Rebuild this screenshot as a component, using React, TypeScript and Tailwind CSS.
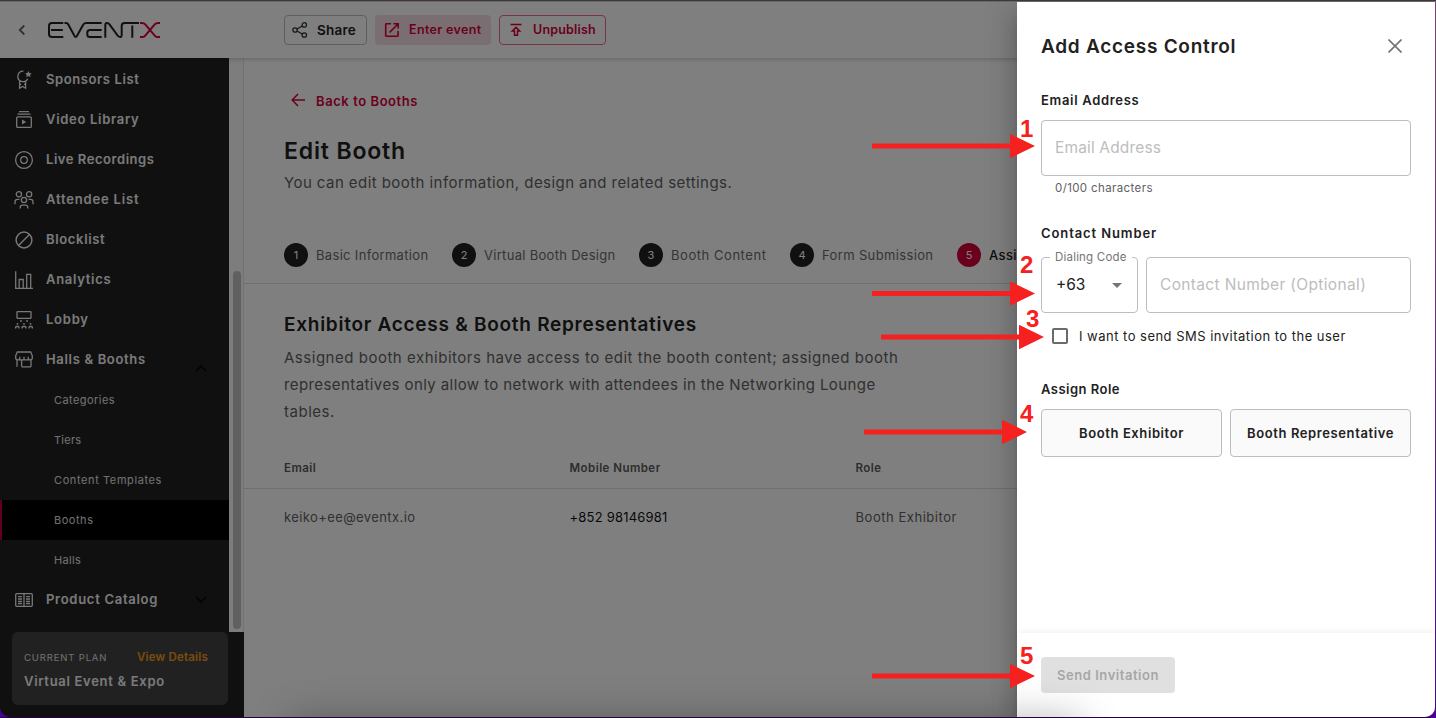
import React from "react";

const navIcon = "h-6 w-6 shrink-0 fill-none stroke-[#f0f0f0] stroke-[1.3]";

const SponsorIcon = () => (
  <svg viewBox="0 0 24 24" className={navIcon}>
    <path d="M11.5 3.2a5.2 5.2 0 1 0 4.2 7.6M7.6 13.2v7l3-1.8 3 1.8v-7M7.6 16.3h1.6M12 16.3h1.6" />
    <path d="M16.4 3l1 2.1 2.3.3-1.7 1.6.5 2.3-2.1-1.2-2.1 1.2.5-2.3-1.7-1.6 2.3-.3z" className="fill-[#f0f0f0] stroke-none" />
  </svg>
);
const VideoIcon = () => (
  <svg viewBox="0 0 24 24" className={navIcon}>
    <path d="M7 3.7h10M5.5 6.2h13" />
    <rect x="4.7" y="8.8" width="14.6" height="10.6" rx="1" />
    <path d="M10 11.6v5l4.2-2.5z" className="fill-[#f0f0f0] stroke-none" />
  </svg>
);
const LiveIcon = () => (
  <svg viewBox="0 0 24 24" className={navIcon}>
    <circle cx="12" cy="12" r="8.4" />
    <circle cx="12" cy="12" r="3.3" />
  </svg>
);
const AttendeeIcon = () => (
  <svg viewBox="0 0 24 24" className={navIcon}>
    <circle cx="6.9" cy="6.3" r="2.6" />
    <circle cx="17.1" cy="6.3" r="2.6" />
    <circle cx="12" cy="12" r="2.6" />
    <path d="M3 16.2v-2.4c0-1.5 1-2.5 2.5-2.5h2M21 16.2v-2.4c0-1.5-1-2.5-2.5-2.5h-2M8.3 20.6v-1.3c0-1.3.9-2.1 2.1-2.1h3.2c1.2 0 2.1.8 2.1 2.1v1.3" />
  </svg>
);
const BlockIcon = () => (
  <svg viewBox="0 0 24 24" className="h-6 w-6 shrink-0 fill-none stroke-[#f0f0f0] stroke-[1.5]">
    <circle cx="12" cy="12" r="7.9" />
    <path d="M17.5 6.5l-11 11" />
  </svg>
);
const AnalyticsIcon = () => (
  <svg viewBox="0 0 24 24" className={navIcon}>
    <path d="M3.7 3.2v17.1h17.2M7.2 20v-8.5h4V20M14.7 20V6.3h4V20" />
  </svg>
);
const LobbyIcon = () => (
  <svg viewBox="0 0 24 24" className={navIcon}>
    <rect x="5" y="3.7" width="14" height="6.6" rx="0.5" />
    <path d="M3.6 20.6v-1.1q0-1 1-1h1.4q1 0 1 1v1.1M10 20.6v-1.1q0-1 1-1h2q1 0 1 1v1.1M17 20.6v-1.1q0-1 1-1h1.4q1 0 1 1v1.1" />
    <g className="fill-[#f0f0f0] stroke-none">
      <circle cx="9" cy="13" r="0.9" />
      <circle cx="15" cy="13" r="0.9" />
      <circle cx="5.5" cy="15.9" r="0.9" />
      <circle cx="12" cy="15.9" r="0.9" />
      <circle cx="18.5" cy="15.9" r="0.9" />
    </g>
  </svg>
);
const BoothIcon = () => (
  <svg viewBox="0 0 24 24" className={navIcon}>
    <path d="M5.3 4h13.4l1.6 3.8v2.2q0 1.8-1.9 1.8H5.6q-1.9 0-1.9-1.8V7.8zM7.8 8.8v1.4q0 1-1 1.6M12 8.8v3M16.2 8.8v1.4q0 1 1 1.6M5 11.8v7M19 11.8v7M9.6 18.6v-6.3M9.6 18.8H19" />
  </svg>
);
const CatalogIcon = () => (
  <svg viewBox="0 0 24 24" className={navIcon}>
    <rect x="3.7" y="5.7" width="16.6" height="12.6" rx="1" />
    <path d="M12 5.7v12.6M6 8.7h4M6 11h4M6 13.3h4M6 15.5h4M14 8.7h4M14 11h4M14 13.3h4M14 15.5h4" />
  </svg>
);

const nav = [
  { label: "Sponsors List", icon: SponsorIcon, cls: "tracking-[0.6px]" },
  { label: "Video Library", icon: VideoIcon, cls: "tracking-[0.7px]" },
  { label: "Live Recordings", icon: LiveIcon, cls: "tracking-[0.55px]" },
  { label: "Attendee List", icon: AttendeeIcon, cls: "tracking-[0.82px]" },
  { label: "Blocklist", icon: BlockIcon, cls: "tracking-[0.66px]" },
  { label: "Analytics", icon: AnalyticsIcon, cls: "tracking-[0.7px]" },
  { label: "Lobby", icon: LobbyIcon, cls: "tracking-[0.75px]" },
  { label: "Halls & Booths", icon: BoothIcon, cls: "tracking-[0.67px]", arrow: "up" },
];
const subNav = [
  { label: "Categories", cls: "tracking-[0.43px]" },
  { label: "Tiers", cls: "tracking-[0.25px]" },
  { label: "Content Templates", cls: "tracking-[0.6px]" },
  { label: "Booths", cls: "tracking-[0.53px]", active: true },
  { label: "Halls", cls: "tracking-[0.3px]" },
];
const steps = [
  { label: "Basic Information", w: "w-[168px]", cls: "tracking-[0.32px]" },
  { label: "Virtual Booth Design", w: "w-[187px]", cls: "tracking-[0.3px]" },
  { label: "Booth Content", w: "w-[151px]", cls: "tracking-[0.55px]" },
  { label: "Form Submission", w: "w-[167px]", cls: "tracking-[0.36px]" },
  { label: "Assi", w: "w-[60px]", cls: "tracking-[0.4px]", active: true },
];

function Logo() {
  return (
    <svg viewBox="0 0 113 16" className="h-4 w-[113px] fill-none stroke-[#212121] stroke-2" role="img" aria-label="EventX">
      <path d="M15.3 1H4Q1 1 1 4V12Q1 15 4 15H15.3M3 8H14.8" />
      <path d="M16.5 1H18Q19.5 1 20.2 2.2L26.5 14Q27.7 16 28.9 14L35 3Q36 1 38 1H53.7" />
      <path d="M53.7 8H42Q39.3 8 39.3 10.5V12.5Q39.3 15 42 15H53.7" />
      <path d="M57.3 15.8V3Q57.3 1 59 1Q60.5 1 61.3 2.2L70 14Q73.7 16.5 73.7 13V4Q73.7 1 76.5 1H91M84.3 3.5V15.8" />
      <path className="stroke-[#d6003a]" d="M92 1h2q2 0 3 1.2l4.3 5q.7.8 0 1.6l-4.3 5q-1 1.2-3 1.2h-2M112 1h-2q-2 0-3 1.2l-4.3 5q-.7.8 0 1.6l4.3 5q1 1.2 3 1.2h2" />
    </svg>
  );
}

function NavItem({ label, icon: Icon, cls, arrow }: { label: string; icon: React.FC; cls: string; arrow?: string }) {
  return (
    <div className="flex h-10 items-center pl-3">
      <Icon />
      <span className={`ml-2.5 whitespace-nowrap text-[13px] font-semibold text-[#f5f5f5] ${cls}`}>{label}</span>
      {arrow && (
        <svg viewBox="0 0 12 8" className={`mr-[22px] ml-auto h-2 w-3 fill-none stroke-[#0a0a0a] stroke-2 ${arrow === "up" ? "mt-4" : "rotate-180"}`}>
          <path d="M1 7l5-5 5 5" />
        </svg>
      )}
    </div>
  );
}

function Sidebar() {
  return (
    <aside className="flex w-[244px] shrink-0 flex-col bg-[#212121]">
      <div className="flex h-[574px] shrink-0">
        <div className="w-[229px] pt-[2px]">
          {nav.map((n) => (
            <NavItem key={n.label} {...n} />
          ))}
          {subNav.map((s) => (
            <div key={s.label} className={`flex h-10 items-center text-[11px] text-[#e0e0e0] ${s.active ? "border-l-2 border-[#c20038] bg-black pl-[52px]" : "pl-[54px]"}`}>
              <span className={s.cls}>{s.label}</span>
            </div>
          ))}
          <NavItem label="Product Catalog" icon={CatalogIcon} cls="tracking-[0.72px]" arrow="down" />
        </div>
        <div className="flex w-[15px] flex-col border-r border-[#e4e4e4] bg-[#fafafa] pt-[213px] pl-1">
          <div className="h-[358px] w-2 rounded-full bg-[#c1c1c1]" />
        </div>
      </div>
      <div className="ml-3 h-[73px] w-[216px] rounded-md bg-[#424242] px-3 pt-[17px]">
        <div className="flex h-[18px] items-center justify-between pr-2">
          <span className="text-[9.5px] tracking-[0.85px] text-[#e0e0e0]">CURRENT PLAN</span>
          <span className="text-[11.5px] font-semibold tracking-[0.2px] text-[#f39a1c]">View Details</span>
        </div>
        <div className="pt-1 text-[13px] leading-5 font-semibold tracking-[0.7px] text-[#f5f5f5]">Virtual Event &amp; Expo</div>
      </div>
    </aside>
  );
}

function Header() {
  return (
    <header className="relative flex h-14 shrink-0 items-center bg-white shadow-[0_1px_5px_rgba(0,0,0,0.22)]">
      <svg viewBox="0 0 8 12" className="ml-[18px] h-3 w-2 fill-none stroke-[#616161] stroke-[1.8]">
        <path d="M6.3 1.5L1.8 6l4.5 4.5" />
      </svg>
      <div className="ml-[22px]">
        <Logo />
      </div>
      <div className="ml-[123px] flex gap-2">
        <button className="flex h-[30px] w-[83px] items-center rounded border border-[#bdbdbd] pl-[7px] text-[#212121]">
          <svg viewBox="0 0 16 16" className="h-4 w-4 fill-none stroke-[#333] stroke-[1.3]">
            <circle cx="12.3" cy="2.9" r="2.2" />
            <circle cx="3" cy="8" r="2.2" />
            <circle cx="12.3" cy="13" r="2.2" />
            <path d="M5 7l5.3-3M5 9l5.3 3" />
          </svg>
          <span className="ml-[9px] text-[13.5px] font-semibold tracking-[0.25px]">Share</span>
        </button>
        <button className="flex h-[30px] w-[116px] items-center rounded bg-[#f6dde4] pl-[9px] text-[#d6003a]">
          <svg viewBox="0 0 16 16" className="h-4 w-4 fill-none stroke-[#d6003a] stroke-[1.6]">
            <path d="M7 1.8H2.3a.6.6 0 0 0-.6.6v11.2c0 .3.3.6.6.6h11.2c.3 0 .6-.3.6-.6V9M9.5 1.8h4.7v4.7M14 2L5.5 10.5" />
          </svg>
          <span className="ml-[9px] text-[12.5px] font-semibold tracking-[0.35px]">Enter event</span>
        </button>
        <button className="flex h-[30px] w-[107px] items-center rounded border border-[#ee6a8b] pl-[9px] text-[#d6003a]">
          <svg viewBox="0 0 14 14" className="h-3.5 w-3.5 fill-none stroke-[#d6003a] stroke-[1.5]">
            <path d="M1.5 1.5h11M7 4.3L3.3 8h2.2v4.2h3V8h2.2z" />
          </svg>
          <span className="ml-[10px] text-[12.5px] font-semibold tracking-[0.2px]">Unpublish</span>
        </button>
      </div>
    </header>
  );
}

function MainContent() {
  return (
    <main className="min-w-0 flex-1 overflow-hidden bg-white text-[#212121]">
      <div className="flex h-[84px] items-center pl-[47px] text-[#d6003a]">
        <svg viewBox="0 0 14 14" className="h-3.5 w-3.5 fill-none stroke-[#d6003a] stroke-[1.5]">
          <path d="M14 7H1.5M7 1L1.2 7 7 13" />
        </svg>
        <span className="ml-[11px] pt-px text-[13px] leading-5 font-semibold tracking-[0.57px]">Back to Booths</span>
      </div>
      <h1 className="pl-10 text-[23px] leading-[18px] font-semibold tracking-[0.84px]">Edit Booth</h1>
      <p className="pl-10 text-[15px] leading-[46px] tracking-[0.44px] text-[#616161]">You can edit booth information, design and related settings.</p>
      <div className="mt-5 flex h-[58px] items-center border-b border-[#dedede] pl-10">
        {steps.map((s, i) => (
          <div key={s.label} className={`flex shrink-0 items-center ${s.w}`}>
            <span className={`flex h-6 w-6 items-center justify-center rounded-full pt-px text-[11px] leading-4 text-white ${s.active ? "bg-[#d6003a]" : "bg-[#212121]"}`}>{i + 1}</span>
            <span className={`ml-2 pt-0.5 text-[13px] whitespace-nowrap ${s.active ? "font-medium text-[#212121]" : "text-[#6a6a6a]"} ${s.cls}`}>{s.label}</span>
          </div>
        ))}
      </div>
      <section className="pt-7">
        <h2 className="pl-10 text-[19px] leading-[26px] font-semibold tracking-[0.73px] whitespace-nowrap">Exhibitor Access &amp; Booth Representatives</h2>
        <p className="pt-1.5 pl-10 text-[15px] leading-[27px] tracking-[0.52px] text-[#616161]">
          Assigned booth exhibitors have access to edit the booth content; assigned booth<br />
          <span className="tracking-[0.41px]">representatives only allow to network with attendees in the Networking Lounge</span><br />
          tables.
        </p>
      </section>
      <div className="mt-[22px] grid h-[42px] grid-cols-[285.5px_286px_1fr] items-center border-b border-[#dedede] pt-[3px] pl-10 text-[11.5px] font-semibold tracking-[0.46px] text-[#5a5a5a]">
        <span>Email</span>
        <span>Mobile Number</span>
        <span>Role</span>
      </div>
      <div className="grid h-14 grid-cols-[285.5px_286px_1fr] items-center pt-0.5 pl-10 text-[13px] text-[#616161]">
        <span className="tracking-[0.4px]">keiko+ee@eventx.io</span>
        <span className="tracking-[0.21px] text-[#111]">+852 98146981</span>
        <span className="tracking-[0.54px]">Booth Exhibitor</span>
      </div>
    </main>
  );
}

function Drawer() {
  return (
    <section className="absolute top-0 right-0 flex h-full w-[418px] flex-col bg-white text-[#212121] shadow-[0_8px_10px_-5px_rgba(0,0,0,0.2),0_16px_24px_2px_rgba(0,0,0,0.14),0_6px_30px_5px_rgba(0,0,0,0.12)]">
      <div className="flex flex-1 flex-col px-6">
        <div className="flex h-[88px] items-center justify-between pr-[9px]">
          <h2 className="pt-0.5 text-[19px] font-semibold tracking-[0.73px] whitespace-nowrap">Add Access Control</h2>
          <svg viewBox="0 0 14 14" className="h-3.5 w-3.5 fill-none stroke-[#757575] stroke-[1.7]">
            <path d="M.5.5l13 13M13.5.5l-13 13" />
          </svg>
        </div>
        <label className="text-[13px] leading-5 font-semibold tracking-[0.68px]">Email Address</label>
        <div className="mt-2.5 flex h-14 items-center rounded border border-[#bdbdbd] pl-[13px] text-[15.5px] tracking-[0.15px] text-[#bdbdbd]">Email Address</div>
        <span className="mt-1 pl-[14px] text-[11.5px] leading-4 tracking-[0.38px] text-[#616161]">0/100 characters</span>
        <label className="mt-[27px] text-[13px] leading-5 font-semibold tracking-[0.9px]">Contact Number</label>
        <div className="mt-[14px] flex gap-2">
          <div className="relative flex h-14 w-[97px] items-center justify-between rounded border border-[#bdbdbd] pr-[15px] pl-[14px]">
            <span className="absolute -top-[9px] left-2 bg-white px-[5px] text-[11.5px] leading-4 tracking-[0.2px] whitespace-nowrap text-[#757575]">Dialing Code</span>
            <span className="text-[15.5px]">+63</span>
            <svg viewBox="0 0 10 5" className="h-[5px] w-2.5 fill-[#757575]">
              <path d="M0 0h10L5 5z" />
            </svg>
          </div>
          <div className="flex h-14 flex-1 items-center rounded border border-[#bdbdbd] pl-[13px] text-[15.5px] tracking-[0.35px] text-[#bdbdbd]">Contact Number (Optional)</div>
        </div>
        <div className="mt-[11px] flex h-6 items-center pl-[11px]">
          <span className="h-4 w-4 rounded-[2px] border-2 border-[#6b6b6b]" />
          <span className="ml-[11px] pt-0.5 text-[13px] tracking-[0.48px]">I want to send SMS invitation to the user</span>
        </div>
        <label className="mt-[31px] text-[13px] leading-5 font-semibold tracking-[0.48px]">Assign Role</label>
        <div className="mt-2.5 grid grid-cols-2 gap-2 text-[13px] font-semibold tracking-[0.6px]">
          <button className="h-12 rounded border border-[#bdbdbd] bg-[#fafafa] pt-0.5 whitespace-nowrap">Booth Exhibitor</button>
          <button className="h-12 rounded border border-[#bdbdbd] bg-[#fafafa] pt-0.5 whitespace-nowrap">Booth Representative</button>
        </div>
      </div>
      <footer className="h-[84px] shrink-0 px-6 pt-6 shadow-[0_-2px_6px_rgba(0,0,0,0.05)]">
        <button className="h-9 w-[134px] rounded bg-[#e0e0e0] pt-0.5 text-[13px] font-semibold tracking-[0.54px] whitespace-nowrap text-[#a6a6a6]">Send Invitation</button>
      </footer>
    </section>
  );
}

const markers = [
  { n: "1", x: 872, y: 146, tx: 1020, ty: 137 },
  { n: "2", x: 872, y: 293.5, tx: 1020, ty: 273 },
  { n: "3", x: 881, y: 337, tx: 1026, ty: 327 },
  { n: "4", x: 864, y: 432, tx: 1020, ty: 422 },
  { n: "5", x: 872, y: 676, tx: 1020, ty: 664 },
];

export default function App() {
  return (
    <div className="relative h-[718px] w-[1436px] overflow-hidden bg-linear-to-b from-[#7d3f6d] via-[#6d1f86] to-[#4b0096] font-[Inter,sans-serif]">
      <div className="h-[2px] w-full border-b border-[#6b6669] bg-[#3a383a]" />
      <div className="relative h-[715px] w-[1435px] overflow-hidden rounded-b-[10px]">
        <div className="flex h-full flex-col">
          <Header />
          <div className="flex min-h-0 flex-1">
            <Sidebar />
            <MainContent />
          </div>
        </div>
        <div className="absolute inset-0 bg-black/50" />
        <Drawer />
        <div className="absolute top-[718px] left-[290px] h-10 w-[790px] shadow-[0_0_40px_rgba(0,0,0,0.3)]" />
      </div>
      <div className="h-px w-[1430px] bg-[#22004d]" />
      <svg viewBox="0 0 1436 718" className="pointer-events-none absolute inset-0 h-[718px] w-[1436px] fill-[#f52020]">
        {markers.map((m) => (
          <g key={m.n}>
            <path d={`M${m.x} ${m.y - 2.5}h138v-9.8l25 12.3l-25 12.3v-9.8h-138z`} />
            <text x={m.tx} y={m.ty} className="font-['Liberation_Sans',sans-serif] text-[24px] font-bold">{m.n}</text>
          </g>
        ))}
      </svg>
    </div>
  );
}
